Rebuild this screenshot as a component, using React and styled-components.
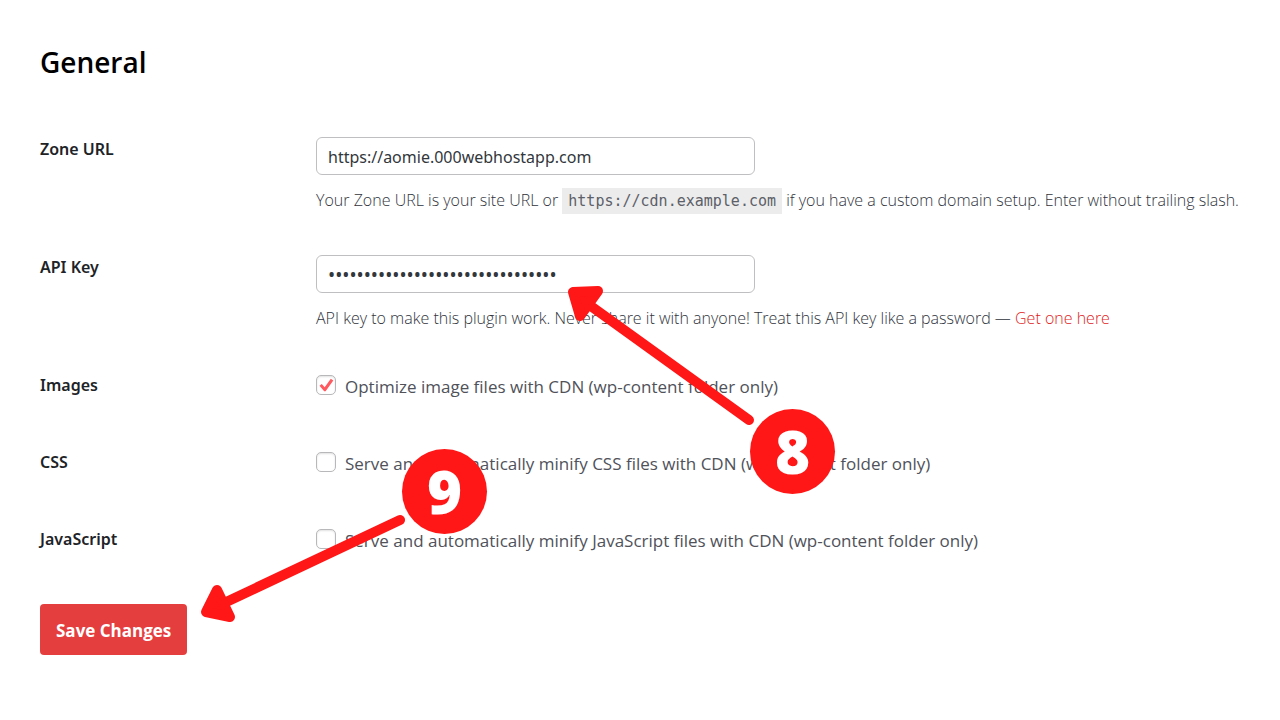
import React from 'react';
import styled, { createGlobalStyle } from 'styled-components';

const GlobalStyle = createGlobalStyle`
  *, *::before, *::after { box-sizing: border-box; }
  body {
    margin: 0;
    background: #fff;
    color: #50525a;
    font-family: "Open Sans", "Noto Sans", sans-serif;
    font-size: 17px;
    line-height: 24px;
  }
`;

const Page = styled.main`
  position: relative;
  padding: 40px 40px 64px;
`;

const Title = styled.h1`
  margin: 0;
  color: #000;
  font-size: 28px;
  font-weight: 600;
  line-height: 44px;
`;

const Form = styled.form`
  padding-top: 53px;
`;

const Row = styled.div`
  display: grid;
  grid-template-columns: 276px minmax(0, 1fr);
  min-height: ${(p) => (p.$tall ? 118 : 77)}px;
`;

const RowLabel = styled.label`
  color: #1d2327;
  font-family: "Noto Sans", sans-serif;
  font-size: 16px;
  font-weight: 600;
`;

const Field = styled.div`
  display: flex;
  flex-direction: column;
  align-items: flex-start;
`;

const Input = styled.input`
  width: 100%;
  max-width: 439px;
  height: 38px;
  padding: 2px 11px 0;
  border: 1px solid #bfbfc2;
  border-radius: 6px;
  background: #fff;
  color: #32373c;
  font: inherit;
  font-family: "Noto Sans", sans-serif;
  font-size: ${(p) => (p.type === 'password' ? 19 : 16)}px;
  line-height: 24px;
`;

const Help = styled.p`
  margin: 12px 0 0;
  color: #30343c;
  font-size: 16px;
  font-weight: 300;
  line-height: 26px;
  white-space: nowrap;
`;

const Code = styled.code`
  display: inline-block;
  padding: 0 6px;
  background: #ececec;
  color: #5c6068;
  font-family: "DejaVu Sans Mono", monospace;
  font-size: 15px;
  font-weight: 400;
  line-height: 26px;
`;

const Link = styled.a`
  color: #e01b1b;
  text-decoration: none;
`;

const CheckLabel = styled.label`
  display: flex;
  align-items: center;
  gap: 9px;
`;

const CheckText = styled.span`
  padding-top: 2px;
  margin-bottom: -2px;
`;

const CheckBox = styled.span`
  display: grid;
  width: 20px;
  height: 20px;

  > * { grid-area: 1 / 1; }

  svg {
    visibility: hidden;
    pointer-events: none;
  }

  input:checked + svg { visibility: visible; }
`;

const CheckInput = styled.input`
  appearance: none;
  width: 20px;
  height: 20px;
  margin: 0;
  border: 1px solid #b8b8bb;
  border-radius: 5px;
  background: #fff;
  box-shadow: inset 0 1px 2px rgba(0, 0, 0, 0.12);
`;

const SaveButton = styled.button`
  display: block;
  height: 51px;
  padding: 2px 16px 0;
  border: 0;
  border-radius: 4px;
  background: #e53e3e;
  color: #fff;
  font: inherit;
  font-size: 17px;
  font-weight: 700;
`;

const Arrows = styled.svg`
  position: absolute;
  top: 0;
  left: 0;
  pointer-events: none;
`;

const Badge = styled.div`
  position: absolute;
  top: ${(p) => p.$y}px;
  left: ${(p) => p.$x}px;
  display: flex;
  align-items: center;
  justify-content: center;
  width: 85px;
  height: 85px;
  border-radius: 50%;
  background: #ff1616;
  color: #fff;
  font-size: 60px;
  font-weight: 800;
  line-height: 85px;
`;

const options = [
  { id: 'images', name: 'Images', text: 'Optimize image files with CDN (wp-content folder only)', on: true },
  { id: 'css', name: 'CSS', text: 'Serve and automatically minify CSS files with CDN (wp-content folder only)' },
  { id: 'js', name: 'JavaScript', text: 'Serve and automatically minify JavaScript files with CDN (wp-content folder only)' },
];

export default function App() {
  return (
    <Page>
      <GlobalStyle />
      <Title>General</Title>
      <Form onSubmit={(e) => e.preventDefault()}>
        <Row $tall>
          <RowLabel htmlFor="zone">Zone URL</RowLabel>
          <Field>
            <Input id="zone" type="text" defaultValue="https://aomie.000webhostapp.com" />
            <Help>
              Your Zone URL is your site URL or <Code>https://cdn.example.com</Code> if you have a
              custom domain setup. Enter without trailing slash.
            </Help>
          </Field>
        </Row>
        <Row $tall>
          <RowLabel htmlFor="key">API Key</RowLabel>
          <Field>
            <Input id="key" type="password" defaultValue="00000000000000000000000000000000" />
            <Help>
              API key to make this plugin work. Never share it with anyone! Treat this API key like a
              password — <Link href="#key">Get one here</Link>
            </Help>
          </Field>
        </Row>
        {options.map((o) => (
          <Row key={o.id}>
            <RowLabel htmlFor={o.id}>{o.name}</RowLabel>
            <Field>
              <CheckLabel>
                <CheckBox>
                  <CheckInput id={o.id} type="checkbox" defaultChecked={o.on} />
                  <svg width="20" height="20" viewBox="0 0 20 20" aria-hidden="true">
                    <path d="M3.5 10.800 5.800 9 8.700 12.200 14.800 3.800 17.300 5.600 9.600 16.300 8.200 16.300Z" fill="#ff5a5f" />
                  </svg>
                </CheckBox>
                <CheckText>{o.text}</CheckText>
              </CheckLabel>
            </Field>
          </Row>
        ))}
        <SaveButton type="submit">Save Changes</SaveButton>
      </Form>
      <Arrows width="860" height="640" viewBox="0 0 860 640" fill="#ff1616" stroke="#ff1616" strokeWidth="10" strokeLinecap="round" strokeLinejoin="round" aria-hidden="true">
        <path d="M749 420 L588 304" />
        <path d="M573 292 L598 291 L580 316 Z" />
        <path d="M400 520 L222 604" />
        <path d="M217 590 L206 612 L230 617 Z" />
      </Arrows>
      <Badge $x={750} $y={409}>8</Badge>
      <Badge $x={402} $y={449}>9</Badge>
    </Page>
  );
}
